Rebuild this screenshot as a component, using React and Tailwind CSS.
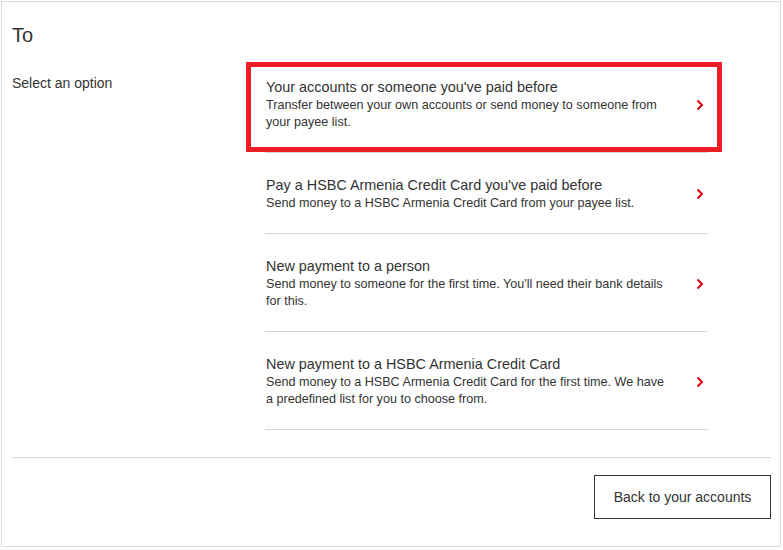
import React from "react";

const options = [
	{
		title: "Your accounts or someone you've paid before",
		desc: "Transfer between your own accounts or send money to someone from your payee list.",
		highlighted: true,
	},
	{
		title: "Pay a HSBC Armenia Credit Card you've paid before",
		desc: "Send money to a HSBC Armenia Credit Card from your payee list.",
	},
	{
		title: "New payment to a person",
		desc: "Send money to someone for the first time. You'll need their bank details for this.",
	},
	{
		title: "New payment to a HSBC Armenia Credit Card",
		desc: "Send money to a HSBC Armenia Credit Card for the first time. We have a predefined list for you to choose from.",
	},
];

const Chevron = () => (
	<svg width="8" height="12" viewBox="0 0 8 12" className="shrink-0">
		<path d="M1.5 1.5 L6 6 L1.5 10.5" fill="none" stroke="#db0011" strokeWidth="2" />
	</svg>
);

const OptionRow = ({ title, desc, highlighted }) => (
	<div className="relative flex items-center justify-between pt-[23px] pb-[21px] border-b border-[#d7d7d7] cursor-pointer">
		<div className="w-[402px] pl-px">
			<div className="text-[14.4px] leading-[19px] text-[#333]">{title}</div>
			<div className="text-[12.6px] leading-[17px] text-[#333]">{desc}</div>
		</div>
		<div className="pr-[4px]">
			<Chevron />
		</div>
		{highlighted && (
			<div className="absolute left-[-19px] top-[7px] w-[476px] h-[90px] border-[5px] border-[#ee1c25] pointer-events-none" />
		)}
	</div>
);

export default function App() {
	return (
		<div
			className="m-px w-[780px] h-[546px] border border-[#dcdcdc] bg-white pl-[10px] pr-[9px] pt-[21px] text-[#333]"
			style={{ fontFamily: '"Liberation Sans", Arial, sans-serif' }}
		>
			<h1 className="text-[20px] leading-[24px] font-normal">To</h1>

			<div className="flex mt-[8px]">
				<div className="w-[253px] shrink-0 pt-[18px] text-[14px] leading-[20px]">
					Select an option
				</div>
				<div className="w-[443px]">
					{options.map((o) => (
						<OptionRow key={o.title} {...o} />
					))}
				</div>
			</div>

			<div className="mt-[27px] border-t border-[#d7d7d7]" />

			<div className="flex justify-end mt-[17px]">
				<button className="w-[177px] h-[44px] border border-[#333] bg-white text-[14px] text-[#333]">
					Back to your accounts
				</button>
			</div>
		</div>
	);
}
